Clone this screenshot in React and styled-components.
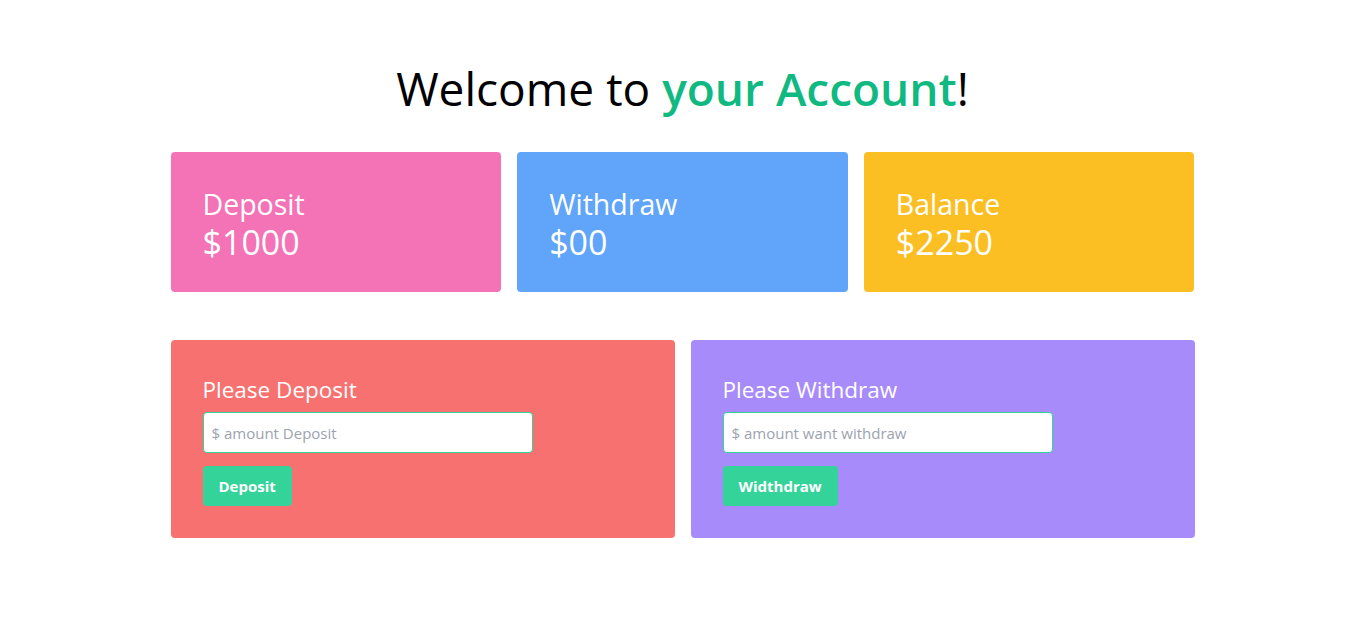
import styled, { createGlobalStyle } from "styled-components";

const GlobalStyle = createGlobalStyle`
  * {
    box-sizing: border-box;
  }

  body {
    margin: 0;
    background: #ffffff;
    font-family: "Segoe UI", "Open Sans", "Noto Sans", sans-serif;
  }
`;

const stats = [
  { label: "Deposit", amount: "$1000", color: "#f472b6" },
  { label: "Withdraw", amount: "$00", color: "#60a5fa" },
  { label: "Balance", amount: "$2250", color: "#fbbf24" },
];

const App = () => {
  return (
    <Main>
      <GlobalStyle />
      <Title>
        Welcome to <Accent>your Account</Accent>!
      </Title>

      <StatGrid>
        {stats.map((s) => (
          <StatCard key={s.label} $bg={s.color}>
            <StatLabel>{s.label}</StatLabel>
            <StatAmount>{s.amount}</StatAmount>
          </StatCard>
        ))}
      </StatGrid>

      <FormGrid>
        <FormCard $bg="#f87171">
          <FormTitle>Please Deposit</FormTitle>
          <Input type="number" placeholder="$ amount Deposit" />
          <Button>Deposit</Button>
        </FormCard>
        <FormCard $bg="#a78bfa">
          <FormTitle>Please Withdraw</FormTitle>
          <Input type="number" placeholder="$ amount want withdraw" />
          <Button>Widthdraw</Button>
        </FormCard>
      </FormGrid>
    </Main>
  );
};

export default App;

const Main = styled.main`
  width: 1024px;
  margin: 0 auto;
  padding-top: 64px;
`;

const Title = styled.h1`
  margin: 0 0 40px;
  font-size: 46px;
  line-height: 48px;
  font-weight: 400;
  text-align: center;
  color: #000000;
`;

const Accent = styled.span`
  color: #10b981;
  font-weight: 600;
`;

const StatGrid = styled.section`
  display: grid;
  grid-template-columns: repeat(3, 1fr);
  gap: 16px;
  margin-bottom: 48px;
`;

const StatCard = styled.div`
  background: ${(p) => p.$bg};
  border-radius: 4px;
  padding: 34px 32px 30px;
  color: #ffffff;
`;

const StatLabel = styled.h2`
  margin: 0;
  font-size: 28.5px;
  line-height: 37px;
  font-weight: 400;
`;

const StatAmount = styled.p`
  margin: 0;
  font-size: 34px;
  line-height: 39px;
`;

const FormGrid = styled.section`
  display: grid;
  grid-template-columns: repeat(2, 1fr);
  gap: 16px;
`;

const FormCard = styled.div`
  display: flex;
  flex-direction: column;
  align-items: flex-start;
  background: ${(p) => p.$bg};
  border-radius: 4px;
  padding: 34px 32px 32px;
`;

const FormTitle = styled.h3`
  margin: 0 0 6px;
  font-size: 22.5px;
  line-height: 32px;
  font-weight: 400;
  color: #ffffff;
`;

const Input = styled.input`
  width: 330px;
  height: 41px;
  padding: 8px;
  border: 1px solid #34d399;
  border-radius: 4px;
  font-family: inherit;
  font-size: 15px;
  outline: none;
  appearance: textfield;

  &::placeholder {
    color: #9ca3af;
  }
`;

const Button = styled.button`
  margin-top: 13px;
  height: 40px;
  padding: 0 16px;
  border: none;
  border-radius: 4px;
  background: #34d399;
  color: #ffffff;
  font-family: inherit;
  font-size: 15px;
  font-weight: 700;
  cursor: pointer;
`;
